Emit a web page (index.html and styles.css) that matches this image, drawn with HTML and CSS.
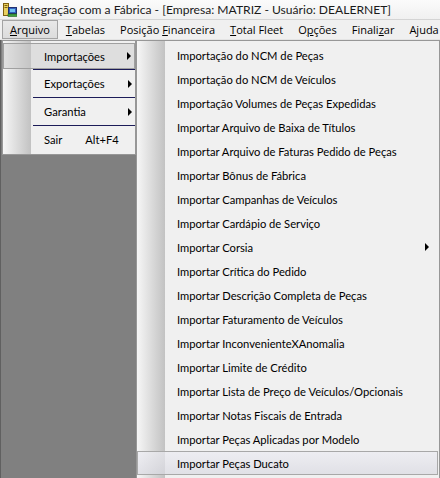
FILE: index.html
```html
<!DOCTYPE html>
<html lang="pt-BR">
<head>
<meta charset="utf-8">
<title>Integração com a Fábrica</title>
<link rel="stylesheet" href="styles.css">
</head>
<body>
<div class="window">
  <div class="titlebar">
    <svg class="appicon" width="14" height="14" viewBox="0 0 14 14">
      <rect x="0.5" y="0.5" width="5" height="12" fill="#e8d060" stroke="#806010"/>
      <rect x="1.5" y="2" width="3" height="1" fill="#806010"/>
      <rect x="1.5" y="4" width="3" height="1" fill="#806010"/>
      <rect x="5.5" y="4.5" width="8" height="6" fill="#3060c0" stroke="#203070"/>
      <rect x="7" y="6" width="5" height="3" fill="#70c0f0"/>
      <rect x="5" y="11" width="9" height="2.5" fill="#40a040" stroke="#206020" stroke-width="0.6"/>
    </svg>
    <span class="title">Integração com a Fábrica - [Empresa: MATRIZ - Usuário: DEALERNET]</span>
  </div>
  <div class="menubar">
    <span class="mbi active"><u>A</u>rquivo</span>
    <span class="mbi"><u>T</u>abelas</span>
    <span class="mbi">Posição <u>F</u>inanceira</span>
    <span class="mbi"><u>T</u>otal Fleet</span>
    <span class="mbi">O<u>p</u>ções</span>
    <span class="mbi">Finali<u>z</u>ar</span>
    <span class="mbi">Ajuda</span>
  </div>
  <div class="workspace">
    <div class="menu main">
      <div class="row hl">Importações<span class="arrow"></span></div>
      <div class="sep"></div>
      <div class="row">Exportações<span class="arrow"></span></div>
      <div class="sep"></div>
      <div class="row">Garantia<span class="arrow"></span></div>
      <div class="sep"></div>
      <div class="row sair"><span>Sair</span><span class="key">Alt+F4</span></div>
    </div>
    <div class="menu sub">
      <div class="srow">Importação do NCM de Peças</div>
      <div class="srow">Importação do NCM de Veículos</div>
      <div class="srow">Importação Volumes de Peças Expedidas</div>
      <div class="srow">Importar Arquivo de Baixa de Títulos</div>
      <div class="srow">Importar Arquivo de Faturas Pedido de Peças</div>
      <div class="srow">Importar Bônus de Fábrica</div>
      <div class="srow">Importar Campanhas de Veículos</div>
      <div class="srow">Importar Cardápio de Serviço</div>
      <div class="srow">Importar Corsia<span class="arrow"></span></div>
      <div class="srow">Importar Crítica do Pedido</div>
      <div class="srow">Importar Descrição Completa de Peças</div>
      <div class="srow">Importar Faturamento de Veículos</div>
      <div class="srow">Importar InconvenienteXAnomalia</div>
      <div class="srow">Importar Limite de Crédito</div>
      <div class="srow">Importar Lista de Preço de Veículos/Opcionais</div>
      <div class="srow">Importar Notas Fiscais de Entrada</div>
      <div class="srow">Importar Peças Aplicadas por Modelo</div>
      <div class="srow hl">Importar Peças Ducato</div>
    </div>
  </div>
</div>
</body>
</html>
```
FILE: styles.css
```css
* { box-sizing: border-box; }
html, body { margin: 0; padding: 0; }
body {
  width: 440px;
  height: 478px;
  overflow: hidden;
  font-family: Lato, "Open Sans", sans-serif;
  font-size: 11.2px;
  color: #000;
  background: #808080;
}
.window {
  width: 440px;
  height: 478px;
  display: flex;
  flex-direction: column;
}
.titlebar {
  height: 20px;
  flex: none;
  display: flex;
  align-items: center;
  padding-left: 3px;
  background: linear-gradient(#fbfbfb, #f0f0f0);
  border-bottom: 1px solid #d4d4d4;
}
.appicon { flex: none; margin-right: 3px; }
.title {
  font-size: 12.1px;
  white-space: nowrap;
  color: #1a1a1a;
}
.menubar {
  height: 20px;
  flex: none;
  display: flex;
  align-items: stretch;
  padding-left: 2px;
  background: #f0f0f0;
  border-bottom: 1px solid #e4e4e4;
  white-space: nowrap;
}
.mbi {
  display: block;
  line-height: 18px;
  padding: 0 6px;
  margin-right: 1px;
  border: 1px solid transparent;
  font-family: "Open Sans", sans-serif;
  font-size: 11px;
}
.mbi.active {
  background: linear-gradient(#e8e8e8, #dcdcdc);
  border-color: #a4a4a4;
  padding: 0 7px;
}
.mbi:last-child { padding-right: 0; margin-right: 0; }
.workspace {
  flex: 1;
  position: relative;
  background: #808080;
  border-left: 1px solid #606060;
}
.menu {
  position: absolute;
  top: 0;
  border: 1px solid #979797;
  background-color: #f0f0f0;
  background-image: linear-gradient(to right, #f6f6f6, #c2c2c2);
  background-repeat: no-repeat;
  background-size: 28px 100%;
  background-origin: padding-box;
}
.main {
  left: 1px;
  width: 134px;
  padding: 2px 0 1px 0;
}
.row {
  height: 27px;
  display: flex;
  align-items: center;
  padding-left: 41px;
  position: relative;
}
.row:first-child { height: 26px; }
.row.hl {
  background: rgba(200, 200, 200, 0.45);
  border: 1px solid #a0a0a0;
  padding-left: 40px;
}
.sep {
  height: 1px;
  margin-left: 30px;
  background: #1c1c58;
}
.sair .key { margin-left: 23px; }
.arrow {
  position: absolute;
  right: 3px;
  top: 50%;
  margin-top: -4px;
  width: 0;
  height: 0;
  border-top: 4px solid transparent;
  border-bottom: 4px solid transparent;
  border-left: 4px solid #000;
}
.sub {
  left: 135px;
  width: 304px;
  bottom: -20px;
  padding: 2px 1px 0 0;
}
.srow {
  height: 24px;
  display: flex;
  align-items: center;
  padding-left: 40px;
  position: relative;
  white-space: nowrap;
}
.srow .arrow { right: 9px; }
.srow.hl {
  background: linear-gradient(rgba(236,236,242,0.7), rgba(218,218,226,0.7));
  border: 1px solid #a8a8a8;
  padding-left: 39px;
}
```
